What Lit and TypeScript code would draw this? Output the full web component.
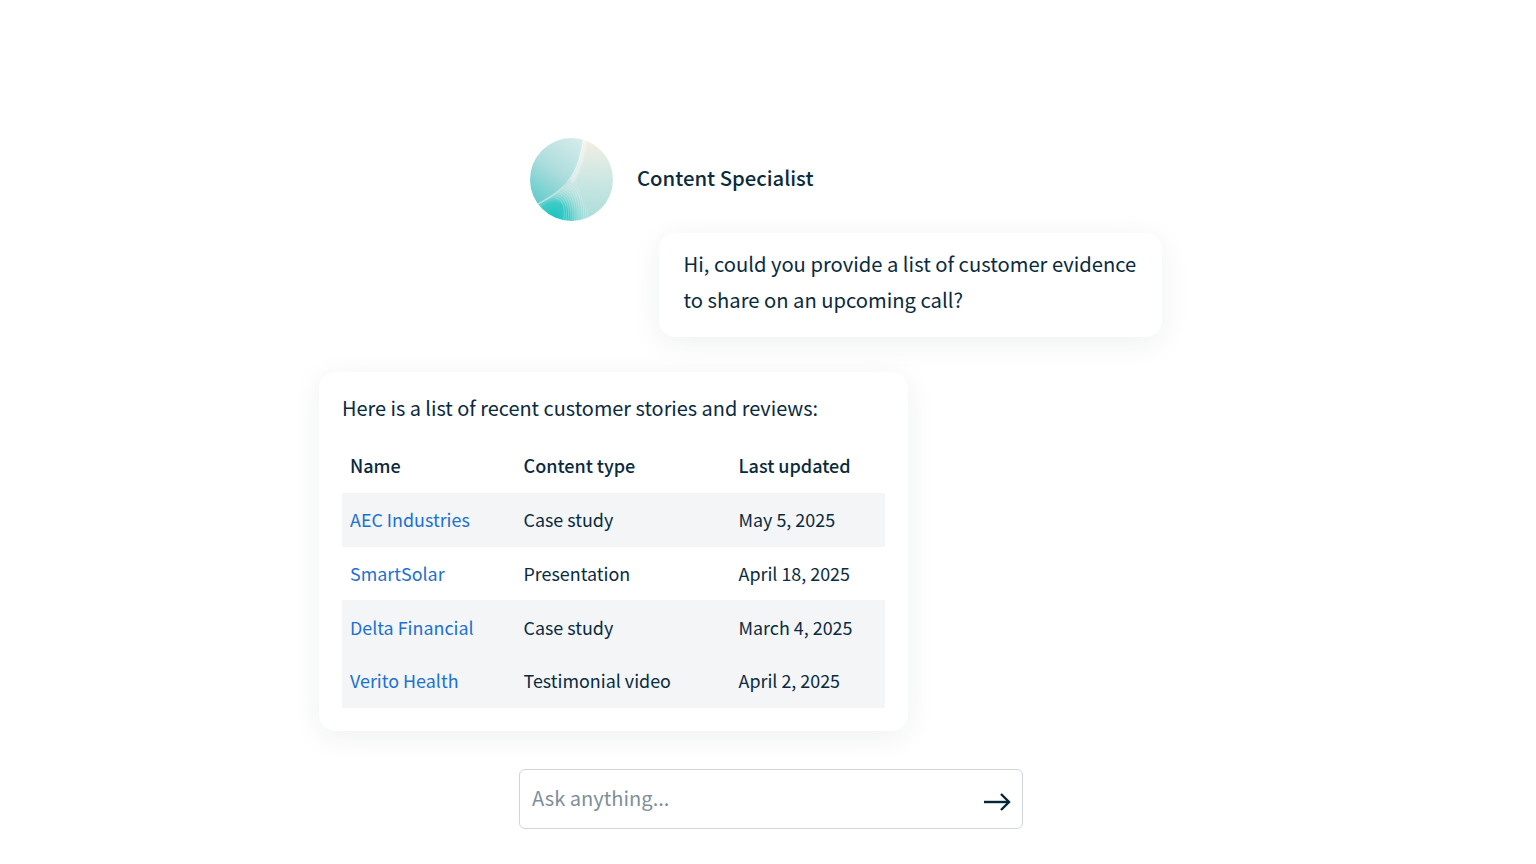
import { LitElement, html, css, svg } from 'lit';
import { customElement } from 'lit/decorators.js';

interface Row {
  name: string;
  type: string;
  updated: string;
  shaded: boolean;
}

const ROWS: Row[] = [
  { name: 'AEC Industries', type: 'Case study', updated: 'May 5, 2025', shaded: true },
  { name: 'SmartSolar', type: 'Presentation', updated: 'April 18, 2025', shaded: false },
  { name: 'Delta Financial', type: 'Case study', updated: 'March 4, 2025', shaded: true },
  { name: 'Verito Health', type: 'Testimonial video', updated: 'April 2, 2025', shaded: true },
];

// fan of thin lines in the lower part of the avatar
const fanLines = Array.from({ length: 12 }, (_, i) => {
  const t = i / 11;
  const x0 = 24 + t * 22;
  const y0 = 60 - t * 18;
  const x1 = 34 + t * 24;
  return svg`<path d="M${x0} ${y0} C${x0 + 10} ${y0 + 2} ${x1 + 2} ${70} ${x1} ${84}" />`;
});

@customElement('app-root')
export class AppRoot extends LitElement {
  static styles = css`
    :host {
      display: block;
      height: 864px;
      overflow: hidden;
      background: #fff;
      color: #0a2a3d;
      font-family: 'Noto Sans CJK SC', 'Noto Sans', sans-serif;
      font-size: 20px;
    }
    .page {
      display: flex;
      flex-direction: column;
      padding-top: 138px;
    }
    .agent {
      display: flex;
      align-items: center;
      gap: 24px;
      margin-left: 530px;
    }
    .avatar {
      display: block;
      width: 83px;
      height: 83px;
    }
    .agent-name {
      font-weight: 500;
      font-size: 20.3px;
      line-height: 28px;
      margin-top: -5px;
    }
    .bubble {
      background: #fff;
      border-radius: 16px;
      box-shadow: 0 6px 30px rgba(3, 38, 59, 0.07);
    }
    .question {
      box-sizing: border-box;
      width: 503px;
      height: 104px;
      margin: 12px 0 0 659px;
      padding: 13px 24.5px;
      font-size: 20.2px;
      line-height: 36px;
    }
    .answer {
      box-sizing: border-box;
      width: 589px;
      height: 359px;
      margin: 35px 0 0 319px;
      padding: 18px 23px 22px;
    }
    .intro {
      font-size: 19.9px;
      line-height: 36px;
    }
    .table {
      margin-top: 13px;
      font-size: 17.9px;
    }
    .row {
      box-sizing: border-box;
      display: grid;
      grid-template-columns: 173.5px 215px 1fr;
      height: 53.75px;
      align-items: center;
      padding: 0 0 1px 8px;
      line-height: 28px;
    }
    .row.head {
      font-weight: 500;
      font-size: 18px;
      padding-bottom: 2px;
    }
    .row.shaded {
      background: #f3f5f7;
    }
    a {
      color: #2070d0;
      text-decoration: none;
    }
    .ask {
      box-sizing: border-box;
      display: flex;
      align-items: center;
      justify-content: space-between;
      width: 504px;
      height: 60px;
      margin: 38px 0 0 519px;
      padding: 0 11px 0 12px;
      border: 1px solid #cfd6dc;
      border-radius: 6px;
      color: #808f99;
    }
    .ask span {
      font-size: 20.1px;
      line-height: 28px;
      margin-top: -2px;
    }
    .ask svg {
      display: block;
      width: 28px;
      height: 20px;
      margin-top: 5px;
    }
  `;

  private _renderAvatar() {
    return html`
      <svg class="avatar" viewBox="0 0 84 84" aria-hidden="true">
        <defs>
          <clipPath id="disc"><circle cx="42" cy="42" r="42" /></clipPath>
          <clipPath id="under">
            <path d="M6 68 C24 60 40 50 47 38 C49 56 56 70 66 84 L6 84 Z" />
          </clipPath>
          <filter id="soft" x="-10%" y="-10%" width="120%" height="120%">
            <feGaussianBlur stdDeviation="0.7" />
          </filter>
          <filter id="glow" x="-40%" y="-10%" width="180%" height="120%">
            <feGaussianBlur stdDeviation="1.4" />
          </filter>
          <linearGradient id="left" x1="0.75" y1="0" x2="0.15" y2="0.85">
            <stop offset="0" stop-color="#dff0ee" />
            <stop offset="0.55" stop-color="#aedddd" />
            <stop offset="1" stop-color="#5acbc9" />
          </linearGradient>
          <linearGradient id="right" x1="0.6" y1="0" x2="0.55" y2="1">
            <stop offset="0" stop-color="#f6efe3" />
            <stop offset="0.45" stop-color="#cee7e3" />
            <stop offset="1" stop-color="#a3dcda" />
          </linearGradient>
          <radialGradient id="low" gradientUnits="userSpaceOnUse" cx="24" cy="82" r="36">
            <stop offset="0" stop-color="#1cc5c0" />
            <stop offset="0.45" stop-color="#3ecac6" />
            <stop offset="1" stop-color="#a3dcda" stop-opacity="0" />
          </radialGradient>
        </defs>
        <g clip-path="url(#disc)">
          <g filter="url(#soft)">
            <rect x="-2" y="-2" width="88" height="88" fill="url(#left)" />
            <path
              d="M54 -2 C52 16 48 34 36 46 C30 52 20 60 4 68 L40 90 L90 90 L90 -2 Z"
              fill="url(#right)"
            />
            <path
              d="M2 70 C24 61 38 50 47 38 C49 56 56 70 68 90 L2 90 Z"
              fill="url(#low)"
            />
          </g>
          <path
            d="M56 1 C54 16 50 32 42 44"
            fill="none"
            stroke="#fff"
            stroke-width="3"
            opacity="0.55"
            filter="url(#glow)"
          />
          <path
            d="M54 1 C52 16 48 32 38 44"
            fill="none"
            stroke="#fff"
            stroke-width="0.7"
            opacity="0.6"
          />
          <g clip-path="url(#under)" fill="none" stroke="#fff" stroke-width="0.4" opacity="0.6">
            ${fanLines}
          </g>
        </g>
      </svg>
    `;
  }

  protected render() {
    return html`
      <div class="page">
        <div class="agent">
          ${this._renderAvatar()}
          <div class="agent-name">Content Specialist</div>
        </div>
        <div class="bubble question">
          Hi, could you provide a list of customer evidence<br />to share on an upcoming call?
        </div>
        <div class="bubble answer">
          <div class="intro">Here is a list of recent customer stories and reviews:</div>
          <div class="table">
            <div class="row head">
              <div>Name</div>
              <div>Content type</div>
              <div>Last updated</div>
            </div>
            ${ROWS.map(
              (row) => html`
                <div class="row ${row.shaded ? 'shaded' : ''}">
                  <div><a href="#">${row.name}</a></div>
                  <div>${row.type}</div>
                  <div>${row.updated}</div>
                </div>
              `
            )}
          </div>
        </div>
        <div class="ask">
          <span>Ask anything...</span>
          <svg viewBox="0 0 28 20" fill="none" stroke="#03263b" stroke-width="2.4">
            <path d="M1 10 H26" />
            <path d="M18 2 L26 10 L18 18" />
          </svg>
        </div>
      </div>
    `;
  }
}

declare global {
  interface HTMLElementTagNameMap {
    'app-root': AppRoot;
  }
}
